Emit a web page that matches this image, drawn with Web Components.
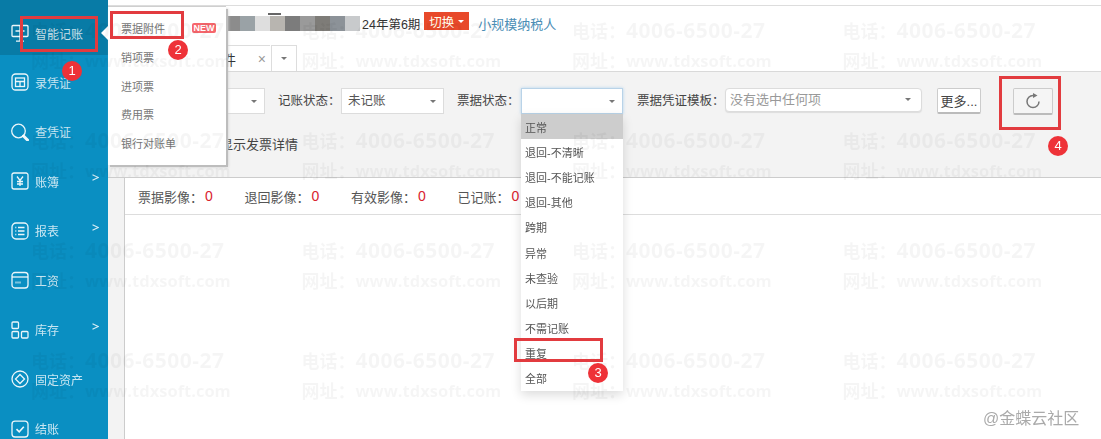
<!DOCTYPE html>
<html lang="zh"><head><meta charset="utf-8"><title>票据附件</title>
<style>
html,body{margin:0;padding:0;background:#fff;height:100%;overflow:hidden}
body{font:12px "Liberation Sans","Noto Sans CJK SC",sans-serif;color:#444}
</style></head><body>
<app-shell>
  <side-nav slot="nav">
    <nav-item icon="monitor" active>智能记账
      <fly-menu slot="fly">
        <fly-link new>票据附件</fly-link><fly-link>销项票</fly-link><fly-link>进项票</fly-link><fly-link>费用票</fly-link><fly-link>银行对账单</fly-link>
      </fly-menu>
    </nav-item>
    <nav-item icon="calc" class="second">录凭证</nav-item>
    <nav-item icon="search">查凭证</nav-item>
    <nav-item icon="yen" more>账簿</nav-item>
    <nav-item icon="list" more>报表</nav-item>
    <nav-item icon="wage">工资</nav-item>
    <nav-item icon="stock" more>库存</nav-item>
    <nav-item icon="asset">固定资产</nav-item>
    <nav-item icon="check">结账</nav-item>
  </side-nav>
  <top-bar>24年第6期</top-bar>
  <tab-strip>票据附件</tab-strip>
  <filter-bar>
    <filter-select w="75" mleft="0">本期</filter-select>
    <filter-label w="60" mleft="13">记账状态：</filter-label>
    <filter-select w="103" mleft="3">未记账</filter-select>
    <filter-label w="60" mleft="13">票据状态：</filter-label>
    <filter-select w="102" mleft="4" focus>
      <option-list slot="pop">
        <opt-row on>正常</opt-row><opt-row>退回-不清晰</opt-row><opt-row>退回-不能记账</opt-row><opt-row>退回-其他</opt-row><opt-row>跨期</opt-row><opt-row>异常</opt-row><opt-row>未查验</opt-row><opt-row>以后期</opt-row><opt-row>不需记账</opt-row><opt-row>重复</opt-row><opt-row>全部</opt-row>
      </option-list>
    </filter-select>
    <filter-label w="84" mleft="14">票据凭证模板：</filter-label>
    <filter-select w="197" mleft="4" placeholder>没有选中任何项</filter-select>
    <tool-button w="44" mleft="15">更多...</tool-button>
    <tool-button w="40" mleft="32" refresh></tool-button>
    <detail-toggle slot="second">显示发票详情</detail-toggle>
  </filter-bar>
  <stat-card>
    <stat-item value="0">票据影像：</stat-item>
    <stat-item value="0">退回影像：</stat-item>
    <stat-item value="0">有效影像：</stat-item>
    <stat-item value="0">已记账：</stat-item>
  </stat-card>
</app-shell>
<water-mark></water-mark>
<call-out x="20" y="16" w="78" h="36"></call-out>
<call-out x="110" y="11" w="74" h="28"></call-out>
<call-out x="514" y="338" w="89" h="24"></call-out>
<call-out x="999" y="76" w="62" h="54"></call-out>
<step-badge x="72" y="71">1</step-badge>
<step-badge x="178" y="50">2</step-badge>
<step-badge x="598" y="373">3</step-badge>
<step-badge x="1058" y="146">4</step-badge>
<source-mark>@金蝶云社区</source-mark>
<script>
const def=(name,css,html,extra={})=>{
  customElements.define(name,class extends HTMLElement{
    connectedCallback(){
      if(this.shadowRoot)return;
      const r=this.attachShadow({mode:'open'});
      r.innerHTML='<style>'+css+'</style>'+(typeof html==='function'?html(this):html);
      if(extra.after)extra.after(this,r);
    }
  });
};
const ICONS={
 monitor:'<rect x="1" y="1.5" width="16" height="11" rx="1"/><path d="M9 1.5V12.5M4.5 7H13.5M9 12.5V17M5 17.2H13"/>',
 calc:'<rect x="1" y="1" width="16" height="16" rx="3.5"/><rect x="4.5" y="5" width="9" height="8.5"/><path d="M4.5 8.5H13.5M9 8.5V13.5"/>',
 search:'<circle cx="7.5" cy="8" r="6.8"/><path d="M12.5 13l4 4" stroke-width="3" stroke-linecap="round"/>',
 yen:'<path d="M1 3.5V15a2 2 0 0 0 2 2H15a2 2 0 0 0 2-2V3a2 2 0 0 0-2-2H3a2 2 0 0 0-2 2.500Z"/><path d="M6 4.500L9 8.500L12 4.500M9 8.500V14M6 9.500H12M6 12H12"/>',
 list:'<rect x="1" y="1" width="16" height="16" rx="4"/><path d="M7 5.500H13.500M7 9H13.500M7 12.500H13.500M4.300 5.500H5.300M4.300 9H5.300M4.300 12.500H5.300"/>',
 wage:'<rect x="1" y="1.500" width="16" height="15.500" rx="3"/><path d="M1 6H17"/><path d="M4.500 11.500H9.500" stroke-dasharray="1 1" stroke-width="2"/>',
 stock:'<rect x="1" y="1" width="6.500" height="6.500" rx="1"/><rect x="1" y="10.500" width="6.500" height="6.500" rx="1"/><rect x="10.500" y="10.500" width="6.500" height="6.500" rx="1"/>',
 asset:'<circle cx="9" cy="9" r="8"/><path d="M9 4.500L13.500 9L9 13.500L4.500 9Z"/>',
 check:'<path d="M14 1.200H4a3 3 0 0 0-3 3V14a3 3 0 0 0 3 3H14a3 3 0 0 0 3-3V4.200a3 3 0 0 0-3-3Z"/><path d="M5.500 9.200L8.200 11.800L12.800 6.800" stroke-width="1.600"/>'
};
def('app-shell',`:host{display:grid;grid-template-columns:108px 1fr;grid-template-rows:50px 21px auto 1fr;height:439px;width:1101px;overflow:hidden;filter:blur(.3px)}
 ::slotted([slot=nav]){grid-row:1/5}`,`<slot name="nav"></slot><slot></slot>`);
def('side-nav',`:host{display:flex;flex-direction:column;background:#0a8fc2;height:439px;position:relative;z-index:3}
 ::slotted(.second){margin-top:2.25px}`,`<slot></slot>`);
def('nav-item',`:host{display:flex;flex:none;align-items:center;height:49.5px;padding-left:11px;box-sizing:border-box;position:relative;color:rgba(255,255,255,.78);font-size:12px;letter-spacing:0}
 :host([active]){height:55px;padding-top:11px;background:#087ba6}
 svg.i{width:18px;height:18px;flex:none;margin-right:6px;fill:none;stroke:rgba(255,255,255,.92);stroke-width:1.300}
 svg.more{position:absolute;left:92px;top:50%;width:7px;height:7px;margin-top:-7px;fill:none;stroke:rgba(255,255,255,.85);stroke-width:1.100}
 .notch{position:absolute;left:101px;top:26px;width:0;height:0;border:solid transparent;border-width:7px 7px 7px 0;border-right-color:#fff}`,
 h=>`<svg class="i" viewBox="0 0 18 18">${ICONS[h.getAttribute('icon')]}</svg><slot></slot>${h.hasAttribute('more')?'<svg class="more" viewBox="0 0 7 7"><path d="M.5 .7L6.300 3.500L.5 6.300"/></svg>':''}${h.hasAttribute('active')?'<i class="notch"></i>':''}<slot name="fly"></slot>`);
def('fly-menu',`:host{position:absolute;left:108px;top:7px;width:118px;height:158px;background:#fff;box-shadow:2px 2px 0 #bdbdbd,0 -1px 0 #cfcfcf,2px 2px 3px #ccc;display:flex;flex-direction:column;padding-top:7px;box-sizing:border-box}`,`<slot></slot>`);
def('fly-link',`:host{display:flex;align-items:center;height:28.700px;padding-left:13px;color:#777;font-size:11px;position:relative;flex:none}
 b{position:absolute;left:84px;top:9px;width:24px;height:10px;background:#f6666c;border-radius:2px;color:#fff;font:bold 9px/10px "Liberation Sans",sans-serif;text-align:center}`,
 h=>`<slot></slot>${h.hasAttribute('new')?'<b>NEW</b>':''}`);
def('top-bar',`:host{display:flex;align-items:center;margin-top:5px;height:45px;box-sizing:border-box;border-top:1px solid #ddd;padding:0 0 9px 117px;background:#fff;color:#333;font-size:12.500px}
 .mask{display:flex;width:135px;height:15px;margin:-1px 2px 0 0;position:relative;filter:blur(.5px)}
 .mask i{flex:none;width:15px;height:15px}
 .mask u{position:absolute;left:43px;top:-3px;width:13px;height:2px;background:#666}
 .sw{display:inline-flex;align-items:center;justify-content:center;gap:4px;width:45px;height:18px;margin:-5px 0 0 4px;background:#e8492a;color:#ffe;font-size:12.500px}
 .sw:after{content:"";border:solid transparent;border-width:3px 3px 0;border-top-color:#fff}
 a{margin-left:9px;color:#4b8eb5;font-size:13px}`,
 `<div class="mask">${['#8c8c8c','#9aa2a6','#dedede','#b8b5b0','#7c7c7c','#9a9a9a','#7e7c78','#8c9298','#c8cacc'].map(c=>`<i style="background:${c}"></i>`).join('')}<u></u></div><slot></slot><span class="sw">切换</span><a>小规模纳税人</a>`);
def('tab-strip',`:host{display:flex;align-items:stretch;height:26px;margin-top:-5px;padding-left:65px;background:#fff;position:relative;z-index:1;margin-bottom:-1px}
 .tab{display:flex;align-items:center;justify-content:space-between;width:97px;box-sizing:border-box;border:1px solid #ddd;border-width:1px 0 0 1px;background:#fff;padding:0 4px 0 8px;font-size:13.500px;color:#333}
 .x{color:#999;font-size:14px}
 .dd{width:26px;margin-left:1px;box-sizing:border-box;border:1px solid #ddd;border-bottom:0;display:flex;align-items:center;justify-content:center}
 .dd:after{content:"";border:solid transparent;border-width:3px 3px 0;border-top-color:#777}`,
 `<div class="tab"><slot></slot><span class="x">×</span></div><div class="dd"></div>`);
def('filter-bar',`:host{display:block;height:107px;box-sizing:border-box;background:#f3f3f3;border-top:1px solid #d9d9d9;border-bottom:1px solid #ccc;padding:16px 0 0 82px;position:relative;z-index:1}
 .r1{display:flex;align-items:flex-start}
 .r2{margin:22px 0 0 30px}`,`<div class="r1"><slot></slot></div><div class="r2"><slot name="second"></slot></div>`);
const ml=`margin-left:var(--ml,0)`;
const box=(h)=>{h.style.setProperty('--ml',(h.getAttribute('mleft')||0)+'px');h.style.width=h.getAttribute('w')+'px'};
def('filter-label',`:host{display:block;height:26px;line-height:26px;${ml};color:#444;font-size:12.500px;flex:none;white-space:nowrap}`,`<slot></slot>`,{after:box});
def('filter-select',`:host{display:block;height:26px;${ml};flex:none;position:relative;box-sizing:border-box;background:#fff;border:1px solid #dcdcdc;font-size:12.500px;color:#555}
 :host([focus]){border-color:#b9d3e8;box-shadow:0 0 3px rgba(102,175,233,.45)}
 :host([placeholder]){height:24px;border-radius:4px;color:#999;box-shadow:0 1px 1px #ddd;font-size:13px}
 .v{display:block;height:24px;padding-left:6px;line-height:24px;white-space:nowrap;overflow:hidden}
 :host([placeholder]) .v{height:22px;line-height:22px;padding-left:4px}
 .c{position:absolute;right:7px;top:11px;border:solid transparent;border-width:3.500px 3.500px 0;border-top-color:#777}
 :host([placeholder]) .c{top:9px;right:10px}`,
 `<span class="v"><slot></slot></span><i class="c"></i><slot name="pop"></slot>`,{after:box});
def('option-list',`:host{position:absolute;left:-1px;top:25px;width:102px;background:#fff;box-shadow:0 4px 10px rgba(0,0,0,.14);display:flex;flex-direction:column;z-index:5}`,`<slot></slot>`);
def('opt-row',`:host{display:flex;align-items:center;height:25.200px;padding-left:4px;font-size:11px;color:#555;flex:none}
 :host([on]){background:#cdcdcd}`,`<slot></slot>`);
def('tool-button',`:host{display:flex;align-items:center;justify-content:center;height:26px;${ml};flex:none;box-sizing:border-box;background:#fff;border:1px solid #ccc;border-bottom:2px solid #bbb;border-radius:2px;font-size:13px;color:#444}
 :host([refresh]){background:#f5f5f5;height:27px}
 svg{width:16px;height:16px;fill:none;stroke:#777;stroke-width:1.500}`,
 h=>h.hasAttribute('refresh')?`<svg viewBox="0 0 16 16"><path d="M14 8.500A6 6 0 1 1 8 2.500"/><path d="M8 0L12.500 2.500L8 5Z" fill="#777" stroke="none"/></svg>`:`<slot></slot>`,{after:box});
def('detail-toggle',`:host{display:block;font-size:13px;color:#444;line-height:16px}`,`<slot></slot>`);
def('stat-card',`:host{display:flex;align-items:center;height:37px;margin-left:16px;box-sizing:border-box;padding-left:13px;background:#fff;border-left:1px solid #ccc;border-bottom:1px solid #ddd;position:relative}
 :host::before{content:"";position:absolute;left:-17px;top:0;width:16px;height:262px;background:#f3f3f3}
 :host::after{content:"";position:absolute;left:-1px;top:36px;width:1px;height:226px;background:#ccc}`,`<slot></slot>`);
def('stat-item',`:host{display:flex;align-items:center;font-size:13px;color:#555;width:106.500px;flex:none}
 b{font-weight:normal;font-size:14px;color:#d9232e;margin-left:2px}`,h=>`<slot></slot><b>${h.getAttribute('value')}</b>`);
const wmCells=[...Array(16)].map(()=>`<div class="cell"><div class="a"><span>电话：</span><b>4006-6500-27</b></div><div class="b"><span>网址：</span><b>www.tdxsoft.com</b></div></div>`).join('');
def('water-mark',`:host{position:absolute;left:0;top:0;width:1101px;height:439px;overflow:hidden;pointer-events:none;z-index:8}
 .g{display:grid;grid-template-columns:repeat(4,270.500px);grid-auto-rows:110px;padding:15px 0 0 31px;color:rgba(0,0,0,.04)}
 .cell>div{height:30px;display:flex;align-items:center;white-space:nowrap}
 span{font:bold 18px "Noto Sans CJK SC",sans-serif}
 .a b{font:bold 21px "Open Sans",sans-serif;letter-spacing:.5px}
 .b b{font:bold 16.500px "Open Sans",sans-serif}`,`<div class="g">${wmCells}</div>`);
const place=(h)=>{h.style.left=h.getAttribute('x')+'px';h.style.top=h.getAttribute('y')+'px';if(h.hasAttribute('w')){h.style.width=h.getAttribute('w')+'px';h.style.height=h.getAttribute('h')+'px'}};
def('call-out',`:host{position:absolute;box-sizing:border-box;border:3px solid #e23b3f;z-index:9}`,``,{after:place});
def('step-badge',`:host{position:absolute;width:20px;height:20px;margin:-10px 0 0 -10px;border-radius:50%;background:#ee3238;color:#fff;font:13px/20px "Liberation Sans",sans-serif;text-align:center;z-index:10}`,`<slot></slot>`,{after:place});
def('source-mark',`:host{position:absolute;left:983px;top:408px;font-size:16px;line-height:22px;color:#aaa;white-space:nowrap;z-index:10}`,`<slot></slot>`);
</script>
</body></html>
